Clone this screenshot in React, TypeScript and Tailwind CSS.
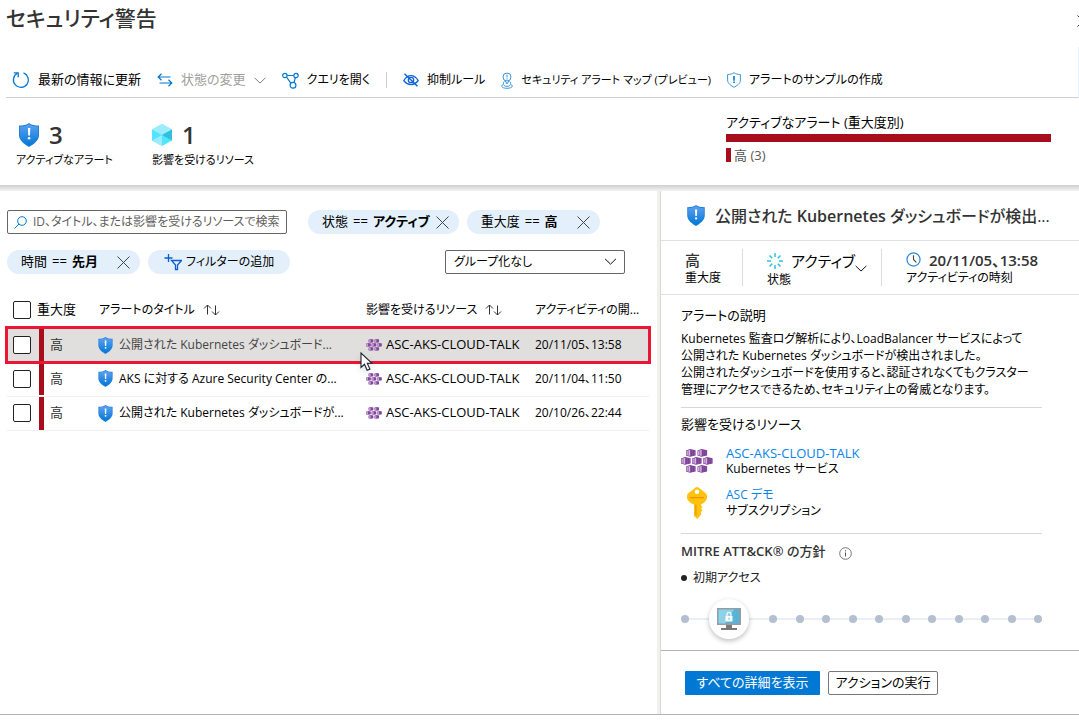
import { useId, type ReactNode } from 'react';

function Shield({ className }: { className: string }) {
  const id = useId();
  return (
    <svg viewBox="0 0 20 24" className={className} aria-hidden="true">
      <defs>
        <linearGradient id={id} x1="0" y1="0" x2="0" y2="1">
          <stop offset="0" stopColor="#5ea0ef" />
          <stop offset="1" stopColor="#0078d4" />
        </linearGradient>
      </defs>
      <path d="M10 0C8 2 4 2.400 0 2.600V12c0 6 6 9.500 10 12 4-2.500 10-6 10-12V2.600C16 2.400 12 2 10 0z" fill="#1f7ddb" />
      <path d="M10 1.200C8 2.900 4.500 3.400 1 3.600V12c0 5.300 5.300 8.500 9 10.800 3.700-2.300 9-5.500 9-10.800V3.600C15.500 3.400 12 2.900 10 1.200z" fill={`url(#${id})`} />
      <path d="M8.900 5h2.400l-.3 7.600H9.200z" fill="#fff" />
      <circle cx="10.100" cy="15.300" r="1.300" fill="#fff" />
    </svg>
  );
}

const podPositions = [
  [5, 0], [16.5, 0],
  [0, 8], [11, 8], [22, 8],
  [5, 16], [16.5, 16],
];

function KubernetesIcon({ className }: { className: string }) {
  return (
    <svg viewBox="0 0 32 24" className={className} aria-hidden="true">
      {podPositions.map(([x, y]) => (
        <g key={`${x}-${y}`} transform={`translate(${x} ${y})`}>
          <path d="M0 1.500 4 0l5.600 1.200v5.400L4 7.700 0 6.500z" fill="#7b3f96" />
          <path d="M.5 1.900 4.200.7v6.400L.5 6.100z" fill="#d3b5e0" />
          <path d="M2.200 1.600v4.700" stroke="#8d55a8" strokeWidth=".7" />
          <path d="M6.300 1v6M8.300 1.300v5.400" stroke="#a06fb8" strokeWidth=".4" />
        </g>
      ))}
    </svg>
  );
}

function RefreshIcon() {
  return (
    <svg viewBox="0 0 18 18" className="size-[18px]" fill="none" stroke="#0078d4" strokeWidth="1.300" aria-hidden="true">
      <path d="M11.500 1.900A7.500 7.500 0 1 1 5.400 2.300" />
      <path d="M1.800 1.800h4.400v4.400" />
    </svg>
  );
}

function SwapIcon() {
  return (
    <svg viewBox="0 0 16 14" className="h-[14px] w-4" fill="none" stroke="#0078d4" strokeWidth="1.200" aria-hidden="true">
      <path d="M4.500.8 1.200 4l3.300 3.200M1.200 4h12.300M11.500 6.800 14.800 10l-3.300 3.200M14.800 10H2.500" />
    </svg>
  );
}

function QueryIcon() {
  return (
    <svg viewBox="0 0 17 17" className="size-[17px]" fill="none" stroke="#0078d4" strokeWidth="1.200" aria-hidden="true">
      <circle cx="2.900" cy="3.500" r="2.200" />
      <circle cx="14" cy="3.500" r="2.200" />
      <circle cx="11" cy="13.300" r="2.900" />
      <path d="M5.100 3.500h6.700M4.600 5l4.300 6.300M13.300 5.600l-1.200 4.900" />
    </svg>
  );
}

function HiddenIcon() {
  return (
    <svg viewBox="0 0 16 14" className="h-[14px] w-4" fill="none" stroke="#0b62d6" strokeWidth="1.300" aria-hidden="true">
      <path d="M.8 7.500C3 4 5.500 2.600 8 2.600s5 1.400 7.200 4.900C13 10.400 10.500 11.600 8 11.600S3 10.400.8 7.500z" />
      <circle cx="8" cy="7" r="2.700" />
      <path d="m1.500.8 13 12.400" strokeWidth="1.500" />
    </svg>
  );
}

function MapIcon() {
  return (
    <svg viewBox="0 0 12 17" className="h-[17px] w-3" fill="none" stroke="#3a96dd" aria-hidden="true">
      <circle cx="6" cy="5" r="4" />
      <path d="M6 2.500v3M6 6.300v1.200M4 8.600 6 12l2-3.400" />
      <path d="M3.500 9.500c-1.500.6-1.500 1.800-.5 2.500-1.500.4-2.200 1.200-2.200 2.200 0 1.300 2.300 2.100 5.200 2.100s5.200-.8 5.200-2.100c0-1-.7-1.800-2.200-2.200 1-.7 1-1.900-.5-2.500" />
      <path d="M2.800 13.300c1.500 1.400 4.900 1.400 6.400 0" />
    </svg>
  );
}

function OutlineShieldIcon() {
  return (
    <svg viewBox="0 0 14 16" className="h-4 w-[14px]" fill="none" stroke="#3a96dd" aria-hidden="true">
      <path d="M7 .7C5.500 2 3 2.400.6 2.500V8c0 3.800 3.800 5.800 6.400 7.300 2.600-1.500 6.400-3.500 6.400-7.300V2.500C11 2.400 8.500 2 7 .7z" />
      <path d="M7 4v4.700M7 9.500V11" stroke="#0078d4" strokeWidth="1.600" />
    </svg>
  );
}

function Chevron({ className }: { className: string }) {
  return (
    <svg viewBox="0 0 14 8" className={className} fill="none" stroke="currentColor" strokeWidth="1.100" aria-hidden="true">
      <path d="m.8 1 6.200 6 6.200-6" />
    </svg>
  );
}

function Cross({ className }: { className: string }) {
  return (
    <svg viewBox="0 0 13 13" className={className} fill="none" stroke="currentColor" aria-hidden="true">
      <path d="m.5.5 12 12M12.500.5l-12 12" />
    </svg>
  );
}

function SortIcon() {
  return (
    <svg viewBox="0 0 17 12" className="h-3 w-[17px] shrink-0" fill="none" stroke="#333" aria-hidden="true">
      <path d="M4.500 10.500V1M1 4.500 4.500 1 8 4.500M12.500 1.500V11M9 7.500l3.500 3.500L16 7.500" />
    </svg>
  );
}

function Tool({ icon, label, chevron, muted }: { icon: ReactNode; label: string; chevron?: boolean; muted?: boolean }) {
  return (
    <button type="button" className={`flex items-center gap-2 whitespace-nowrap ${muted ? 'text-[#a19f9d]' : 'text-black'}`}>
      {icon}
      {label}
      {chevron && <Chevron className="h-[7px] w-3 text-[#777]" />}
    </button>
  );
}

function Pill({ name, value }: { name: string; value: string }) {
  return (
    <button
      type="button"
      aria-label={`${name} == ${value}`}
      className="flex h-6 min-w-[133px] items-center justify-between gap-1.5 whitespace-nowrap rounded-full bg-[#e3f0fb] pl-[14px] pr-2.5"
    >
      <span className="flex gap-[5px]">
        <span>{name}</span>
        <span>==</span>
        <b className="font-semibold">{value}</b>
      </span>
      <Cross className="size-[13px] text-[#444]" />
    </button>
  );
}

function Check({ label }: { label: string }) {
  return (
    <input
      type="checkbox"
      aria-label={label}
      className="block size-[18px] appearance-none rounded-[2px] border border-[#222] bg-white checked:bg-[#0078d4]"
    />
  );
}

const alerts = [
  { title: '公開された Kubernetes ダッシュボード...', time: '20/11/05、13:58', selected: true },
  { title: 'AKS に対する Azure Security Center の...', time: '20/11/04、11:50', selected: false },
  { title: '公開された Kubernetes ダッシュボードが...', time: '20/10/26、22:44', selected: false },
];

function Cursor() {
  return (
    <svg viewBox="0 0 13 20" className="absolute -left-[6px] top-[17px] z-10 h-5 w-[13px] drop-shadow-md" aria-hidden="true">
      <path d="M1 1v14.500l3.500-3.200 2.600 6 2.800-1.200L7.300 11.300H12z" fill="#fff" stroke="#1b2430" strokeWidth="1.100" />
    </svg>
  );
}

function AlertTable() {
  return (
    <table className="mt-[17px] w-full table-fixed border-collapse">
      <colgroup>
        <col className="w-[30px]" />
        <col className="w-[61px]" />
        <col />
        <col className="w-[169px]" />
        <col className="w-[114px]" />
      </colgroup>
      <thead>
        <tr className="h-[37px] whitespace-nowrap text-left text-[12px] [&>th]:p-0 [&>th]:font-normal">
          <th className="!pl-1.5"><Check label="すべて選択" /></th>
          <th className="text-[13px]">重大度</th>
          <th><span className="flex items-center gap-2 pl-px">アラートのタイトル<SortIcon /></span></th>
          <th><span className="flex items-center gap-2">影響を受けるリソース<SortIcon /></span></th>
          <th>アクティビティの開...</th>
        </tr>
      </thead>
      <tbody>
        {alerts.map((a) => (
          <tr
            key={a.time}
            className={`h-[34px] whitespace-nowrap text-[12px] [&>td]:p-0 ${
              a.selected
                ? 'bg-[#e1dfdd] text-[#444] outline-[3px] -outline-offset-1 outline-[#eb1536]'
                : 'border-b border-[#f0f0f0] text-black'
            }`}
          >
            <td className="!pl-1.5"><Check label={a.title} /></td>
            <td>
              <span className="ml-0.5 flex h-[33px] items-center border-l-[5px] border-[#a80d1c] pl-1.5 text-[13px] text-[#333]">高</span>
            </td>
            <td>
              <span className="flex items-center gap-1.5">
                <Shield className="h-[17px] w-[15px] shrink-0" />
                {a.title}
              </span>
            </td>
            <td>
              <span className="relative flex items-center gap-1 text-[13px] text-black">
                <KubernetesIcon className="h-3 w-4 shrink-0" />
                ASC-AKS-CLOUD-TALK
                {a.selected && <Cursor />}
              </span>
            </td>
            <td className="text-black">{a.time}</td>
          </tr>
        ))}
      </tbody>
    </table>
  );
}

function TacticTimeline() {
  return (
    <div className="relative mt-2 flex h-12 items-center">
      <div className="absolute inset-x-1 top-[23px] h-0.5 bg-[#e9eff4]" />
      <span className="relative size-2 rounded-full bg-[#b4c0cf]" />
      <span className="relative mx-5 flex size-10 items-center justify-center rounded-full bg-white shadow-[0_2px_5px_rgba(0,0,0,0.25)]">
        <svg viewBox="0 0 24 22" className="h-[22px] w-6" aria-hidden="true">
          <path d="M0 0h24v17H0z" fill="#999b9d" />
          <path d="M1.500 1.500h21v14h-21z" fill="#59b4d9" />
          <path d="M1.500 1.500H17l-9 14H1.500z" fill="#8dd2e8" />
          <path d="M9 17h6v3H9zM4 20h16v2H4z" fill="#7a7a7a" />
          <path d="M8.500 8h7v5.500h-7z" fill="#fff" />
          <path d="M10 8V6.300a2 2 0 0 1 4 0V8" fill="none" stroke="#fff" strokeWidth="1.200" />
          <path d="M11.500 9.700h1v2h-1z" fill="#59b4d9" />
        </svg>
      </span>
      <span className="relative flex flex-1 justify-between">
        {Array.from({ length: 11 }, (_, i) => (
          <span key={i} className="size-2 rounded-full bg-[#b4c0cf]" />
        ))}
      </span>
    </div>
  );
}

function DetailPanel() {
  return (
    <aside className="flex w-[419px] shrink-0 flex-col border-l border-[#d9d9d9]">
      <div className="flex h-[50px] items-center gap-2.5 border-b border-[#e0e0e0] pl-[26px]">
        <Shield className="h-[21px] w-[18px] shrink-0" />
        <h2 className="whitespace-nowrap text-[16px] font-medium text-[#333]">
          公開された <span className="font-semibold">Kubernetes</span> ダッシュボードが検出...
        </h2>
      </div>
      <div className="flex h-[54px] items-center border-b border-[#e0e0e0] pl-6">
        <div className="w-[57px]">
          <div className="text-[15px] font-medium leading-5 text-[#333]">高</div>
          <div className="text-[12px] leading-4">重大度</div>
        </div>
        <div className="h-[37px] w-[140px] border-x border-[#dcdcdc] pl-6">
          <button type="button" className="flex items-center gap-2 text-[15px] leading-5">
            <svg viewBox="0 0 16 16" className="size-4" fill="none" stroke="#32bedd" strokeWidth="1.500" aria-hidden="true">
              <path d="M8 0v4M8 12v4M0 8h4M12 8h4M2.500 2.500l2.700 2.700M10.800 10.800l2.700 2.700M13.500 2.500l-2.700 2.700M5.200 10.800l-2.700 2.700" />
            </svg>
            アクティブ
            <Chevron className="-ml-2 mt-4 h-[7px] w-3 shrink-0" />
          </button>
          <div className="text-[12px] leading-4">状態</div>
        </div>
        <div className="pl-6">
          <div className="flex items-center gap-2 text-[15px] font-semibold leading-5 text-[#333]">
            <svg viewBox="0 0 16 16" className="size-[15px]" fill="none" aria-hidden="true">
              <circle cx="8" cy="8" r="7" stroke="#2b88d8" strokeWidth="1.300" />
              <path d="M8 3.500V8l3 3" stroke="#444" strokeWidth="1.200" />
            </svg>
            20/11/05、13:58
          </div>
          <div className="text-[12px] leading-4">アクティビティの時刻</div>
        </div>
      </div>
      <div className="flex-1 pl-5 pr-[37px]">
        <section className="border-b border-[#d8d8d8] pb-[9px] pt-[11px]">
          <h3 className="leading-[18px]">アラートの説明</h3>
          <p className="mt-1.5 whitespace-nowrap text-[12px] leading-[17px]">
            Kubernetes 監査ログ解析により、LoadBalancer サービスによって
            <br />
            公開された Kubernetes ダッシュボードが検出されました。
            <br />
            公開されたダッシュボードを使用すると、認証されなくてもクラスター
            <br />
            管理にアクセスできるため、セキュリティ上の脅威となります。
          </p>
        </section>
        <section className="border-b border-[#d8d8d8] pb-[14px] pt-[7px]">
          <h3 className="leading-[18px]">影響を受けるリソース</h3>
          <div className="mt-3 flex items-center gap-[13px] text-[12px] leading-4">
            <KubernetesIcon className="h-6 w-8" />
            <div>
              <a href="#resource" className="block text-[13px] text-[#0a84e8]">ASC-AKS-CLOUD-TALK</a>
              Kubernetes サービス
            </div>
          </div>
          <div className="mt-2.5 flex items-center gap-[13px] text-[12px] leading-4">
            <span className="flex w-8 justify-center">
              <svg viewBox="0 0 20 32" className="h-8 w-5" aria-hidden="true">
                <path d="M8.500.5Q10-.3 11.500.5L19 6.500q1.500 1.500 1 4.500c-.5 3-3.500 5.500-6 6.500v10L10.500 32 7 29V17.500C4 16.500.5 14 0 11q-.3-3 1-4.500z" fill="#ffc20e" />
                <path d="M3 10h14v1.300H3z" fill="#f5900c" />
                <path d="M8 17.500h1.600V29L8 27.800z" fill="#f5a00c" />
                <circle cx="10" cy="4.800" r="2.200" fill="#fff" />
                <path d="m14 18.500 1.500 1.500-1.500 1.500 1.500 1.700L14 25z" fill="#ffc20e" />
              </svg>
            </span>
            <div>
              <a href="#subscription" className="block text-[#0a84e8]">ASC デモ</a>
              サブスクリプション
            </div>
          </div>
        </section>
        <section className="pt-2">
          <h3 className="flex items-center gap-[14px] font-medium leading-[18px] text-[#333]">
            <span>
              <span className="font-semibold">MITRE ATT&CK®</span> の方針
            </span>
            <svg viewBox="0 0 13 13" className="mt-1 size-[13px]" fill="none" stroke="#555" aria-hidden="true">
              <circle cx="6.500" cy="6.500" r="5.800" strokeWidth=".8" />
              <path d="M6.500 5.500v4M6.500 3.200v1.200" />
            </svg>
          </h3>
          <ul className="mt-[9px] text-[12px] leading-[18px] text-[#222]">
            <li className="flex items-center gap-1.5">
              <span className="size-1.5 rounded-full bg-[#222]" />
              初期アクセス
            </li>
          </ul>
          <TacticTimeline />
        </section>
      </div>
      <div className="flex items-start gap-2 border-t border-[#b3b3b3] pb-[19px] pl-6 pt-5">
        <button type="button" className="h-6 w-[135px] whitespace-nowrap rounded-[1px] bg-[#0078d4] text-white">すべての詳細を表示</button>
        <button type="button" className="h-6 w-[110px] whitespace-nowrap rounded-[2px] border border-[#777]">アクションの実行</button>
      </div>
    </aside>
  );
}

export default function App() {
  return (
    <div className="min-h-screen overflow-hidden bg-white pb-2.5 font-['Open_Sans','Noto_Sans_CJK_JP',sans-serif] text-[13px] text-black [font-feature-settings:'palt']">
      <div className="flex min-h-[calc(100vh-10px)] flex-col border-b border-[#b3b3b3]">
        <header className="flex h-[47px] items-start justify-between pl-1.5">
          <h1 className="pt-0.5 text-[21px] font-medium leading-8 text-[#333]">セキュリティ警告</h1>
          <button type="button" aria-label="閉じる" className="-mr-[10px] mt-[15px]">
            <Cross className="size-3 text-[#222]" />
          </button>
        </header>

        <nav className="ml-1.5 flex h-[51px] items-center border-b border-r border-b-[#cfcfcf] border-r-[#eaf4fc] pl-1.5 pt-4">
          <div className="flex items-center gap-4">
            <Tool icon={<RefreshIcon />} label="最新の情報に更新" />
            <Tool icon={<SwapIcon />} label="状態の変更" chevron muted />
            <div className="text-[12px]">
              <Tool icon={<QueryIcon />} label="クエリを開く" />
            </div>
          </div>
          <span className="mx-4 h-4 w-px bg-[#ccc]" />
          <div className="flex items-center gap-4 text-[12px]">
            <Tool icon={<HiddenIcon />} label="抑制ルール" />
            <div className="text-[11px]">
              <Tool icon={<MapIcon />} label="セキュリティ アラート マップ (プレビュー)" />
            </div>
            <Tool icon={<OutlineShieldIcon />} label="アラートのサンプルの作成" />
          </div>
        </nav>

        <section className="flex h-[87px] justify-between pl-4 pr-7">
          <div className="flex pt-[22px]">
            <div className="w-[136px]">
              <div className="flex items-center gap-2.5 pl-[3px]">
                <Shield className="h-6 w-5" />
                <span className="text-[24px] font-semibold leading-[30px] text-[#333]">3</span>
              </div>
              <div className="text-[11px] leading-[20px]">アクティブなアラート</div>
            </div>
            <div>
              <div className="flex items-center gap-2.5">
                <svg viewBox="0 0 20 22" className="h-[22px] w-5" aria-hidden="true">
                  <path d="M10 0l10 5.500v11L10 22 0 16.500v-11z" fill="#50e6ff" />
                  <path d="M10 0l10 5.500L10 11 0 5.500z" fill="#9cebff" />
                  <path d="M20 5.500v11L10 11z" fill="#32bedd" />
                  <path d="M0 16.500 10 11v11z" fill="#9cebff" />
                </svg>
                <span className="text-[24px] font-semibold leading-[30px] text-[#333]">1</span>
              </div>
              <div className="text-[11px] leading-[20px]">影響を受けるリソース</div>
            </div>
          </div>
          <div className="w-[325px] pt-[13px]">
            <div className="leading-[22px]">アクティブなアラート (重大度別)</div>
            <div className="mt-px h-2 bg-[#a80d1c]" />
            <div className="mt-1.5 flex items-center gap-[3px] leading-[14px] text-[#555]">
              <span className="h-3.5 w-[5px] bg-[#a80d1c]" />高 (3)
            </div>
          </div>
        </section>

        <div className="h-1.5 bg-linear-to-b from-[#cfcfcf] to-[#f3f3f3]" />

        <main className="flex flex-1">
          <div className="min-w-0 flex-1 pl-[7px] pr-2 pt-[19px]">
            <div className="flex items-center">
              <label className="flex h-6 w-[280px] items-center gap-1.5 rounded-[2px] border border-[#666] px-1.5">
                <svg viewBox="0 0 13 13" className="size-[13px] shrink-0" fill="none" stroke="#0078d4" aria-hidden="true">
                  <circle cx="8" cy="5" r="4.300" />
                  <path d="M5 8 .5 12.500" />
                </svg>
                <input
                  type="text"
                  aria-label="検索"
                  placeholder="ID、タイトル、または影響を受けるリソースで検索"
                  className="min-w-0 flex-1 bg-transparent text-[12px] outline-none placeholder:text-[#605e5c]"
                />
              </label>
              <div className="ml-[21px] flex gap-2">
                <Pill name="状態" value="アクティブ" />
                <Pill name="重大度" value="高" />
              </div>
            </div>
            <div className="mt-4 flex items-center gap-2">
              <Pill name="時間" value="先月" />
              <button type="button" className="flex h-6 items-center gap-1 whitespace-nowrap rounded-full bg-[#e3f0fb] pl-4 pr-4 text-[12px]">
                <svg viewBox="0 0 18 18" className="size-[18px]" fill="none" stroke="#0b5cd6" strokeWidth="1.300" aria-hidden="true">
                  <path d="M4.500 1v8M.5 5h8M7.500 7.500h10l-4 4.500v4.500h-2V12z" />
                </svg>
                フィルターの追加
              </button>
              <div className="relative ml-auto mr-6 w-[180px]">
                <select aria-label="グループ化" className="block h-6 w-full appearance-none rounded-[2px] border border-[#666] bg-white pl-2 pr-7 text-[12px]">
                  <option>グループ化なし</option>
                </select>
                <Chevron className="pointer-events-none absolute right-2 top-2 h-[7px] w-[13px]" />
              </div>
            </div>
            <AlertTable />
          </div>
          <div className="w-[3px] bg-[#f1f0ef]" />
          <DetailPanel />
        </main>
      </div>
    </div>
  );
}
